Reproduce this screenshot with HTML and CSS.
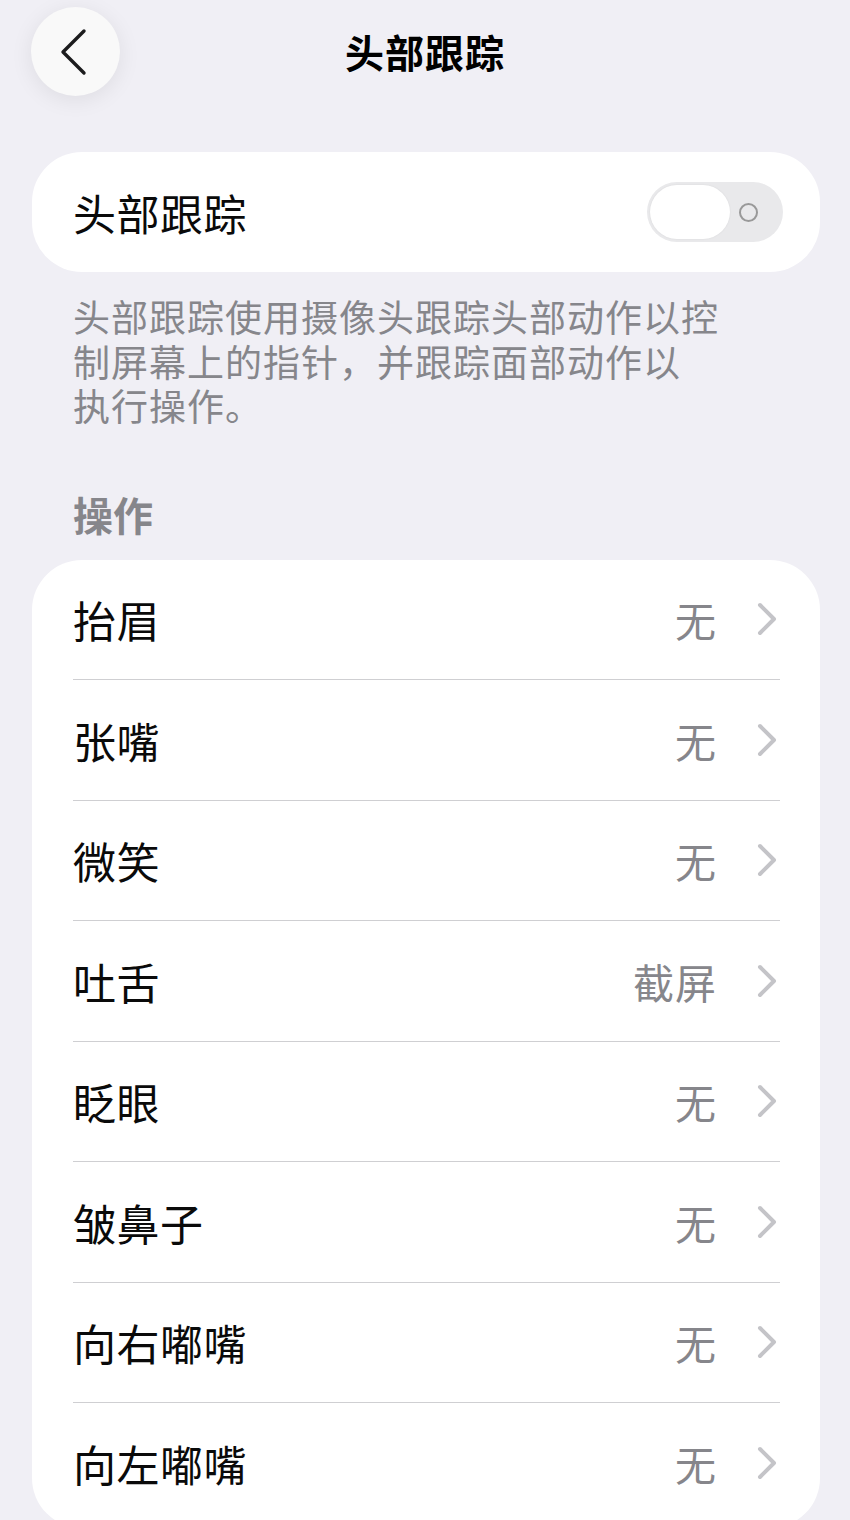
FILE: index.html
```html
<!DOCTYPE html>
<html lang="zh-CN">
    <head>
        <meta charset="utf-8">
        <meta name="viewport" content="width=device-width, initial-scale=1.0">
        <link rel="stylesheet" href="styles.css">
        <title>头部跟踪</title>
    </head>
    <body>
        <div class="screen">
            <div class="navbar">
                <div class="nav-side">
                    <button class="back-btn" type="button">
                        <svg width="28" height="48" viewBox="0 0 28 48">
                            <path d="M25 3 L4 24 L25 45" fill="none" stroke="#1c1c1e" stroke-width="3.4" stroke-linecap="round" stroke-linejoin="round"/>
                        </svg>
                    </button>
                </div>
                <h1 class="nav-title">头部跟踪</h1>
                <div class="nav-side"></div>
            </div>

            <section class="card card-single">
                <span class="row-label">头部跟踪</span>
                <div class="switch">
                    <div class="switch-knob"></div>
                    <div class="switch-off"></div>
                </div>
            </section>

            <p class="footnote">头部跟踪使用摄像头跟踪头部动作以控<br>制屏幕上的指针，并跟踪面部动作以<br>执行操作。</p>

            <h2 class="group-header">操作</h2>

            <section class="card card-list">
                <div class="row"><span class="row-label">抬眉</span><span class="row-value">无</span><span class="chevron"><svg width="20" height="34" viewBox="0 0 20 34"><path d="M3 3 L17 17 L3 31" fill="none" stroke="#c4c4c8" stroke-width="4" stroke-linecap="round" stroke-linejoin="round"/></svg></span></div>
                <div class="row"><span class="row-label">张嘴</span><span class="row-value">无</span><span class="chevron"><svg width="20" height="34" viewBox="0 0 20 34"><path d="M3 3 L17 17 L3 31" fill="none" stroke="#c4c4c8" stroke-width="4" stroke-linecap="round" stroke-linejoin="round"/></svg></span></div>
                <div class="row"><span class="row-label">微笑</span><span class="row-value">无</span><span class="chevron"><svg width="20" height="34" viewBox="0 0 20 34"><path d="M3 3 L17 17 L3 31" fill="none" stroke="#c4c4c8" stroke-width="4" stroke-linecap="round" stroke-linejoin="round"/></svg></span></div>
                <div class="row"><span class="row-label">吐舌</span><span class="row-value">截屏</span><span class="chevron"><svg width="20" height="34" viewBox="0 0 20 34"><path d="M3 3 L17 17 L3 31" fill="none" stroke="#c4c4c8" stroke-width="4" stroke-linecap="round" stroke-linejoin="round"/></svg></span></div>
                <div class="row"><span class="row-label">眨眼</span><span class="row-value">无</span><span class="chevron"><svg width="20" height="34" viewBox="0 0 20 34"><path d="M3 3 L17 17 L3 31" fill="none" stroke="#c4c4c8" stroke-width="4" stroke-linecap="round" stroke-linejoin="round"/></svg></span></div>
                <div class="row"><span class="row-label">皱鼻子</span><span class="row-value">无</span><span class="chevron"><svg width="20" height="34" viewBox="0 0 20 34"><path d="M3 3 L17 17 L3 31" fill="none" stroke="#c4c4c8" stroke-width="4" stroke-linecap="round" stroke-linejoin="round"/></svg></span></div>
                <div class="row"><span class="row-label">向右嘟嘴</span><span class="row-value">无</span><span class="chevron"><svg width="20" height="34" viewBox="0 0 20 34"><path d="M3 3 L17 17 L3 31" fill="none" stroke="#c4c4c8" stroke-width="4" stroke-linecap="round" stroke-linejoin="round"/></svg></span></div>
                <div class="row"><span class="row-label">向左嘟嘴</span><span class="row-value">无</span><span class="chevron"><svg width="20" height="34" viewBox="0 0 20 34"><path d="M3 3 L17 17 L3 31" fill="none" stroke="#c4c4c8" stroke-width="4" stroke-linecap="round" stroke-linejoin="round"/></svg></span></div>
            </section>
        </div>
    </body>
</html>
```

FILE: styles.css
```css
body {
  margin: 0;
  background-color: #f0eff5;
  font-family: "Noto Sans CJK SC", "Noto Sans", sans-serif;
  color: #000;
}
.screen {
  width: 850px;
  height: 1520px;
  overflow: hidden;
}

/* top bar */
.navbar {
  display: grid;
  grid-template-columns: 1fr auto 1fr;
  align-items: center;
  padding: 7px 31px 0 31px;
  height: 89px;
}
.back-btn {
  width: 89px;
  height: 89px;
  border: none;
  border-radius: 50%;
  background-color: #f9f9f9;
  box-shadow: 0 4px 22px rgba(0, 0, 0, 0.08);
  display: flex;
  align-items: center;
  justify-content: center;
  padding: 0 6px 0 0;
}
.nav-title {
  margin: 0;
  font-size: 39px;
  font-weight: 700;
  line-height: 44px;
  letter-spacing: 1px;
  position: relative;
  top: -1px;
}

/* grouped cards */
.card {
  background-color: #fff;
  border-radius: 50px;
  margin: 0 30px 0 32px;
}
.card-single {
  margin-top: 56px;
  height: 120px;
  display: flex;
  align-items: center;
  justify-content: space-between;
  padding: 0 37px 0 41px;
}
.row-label {
  font-size: 43px;
  line-height: 50px;
  letter-spacing: 0.5px;
  color: #0a0a0a;
}

.switch {
  width: 136px;
  height: 60px;
  border-radius: 30px;
  background-color: #e9e9eb;
  display: flex;
  align-items: center;
  padding: 0 3px;
  box-sizing: border-box;
}
.switch-knob {
  width: 80px;
  height: 54px;
  border-radius: 27px;
  background-color: #fff;
  box-shadow: 0 0 2px rgba(0, 0, 0, 0.08);
}
.switch-off {
  width: 15px;
  height: 15px;
  border: 2px solid #999;
  border-radius: 50%;
  margin-left: 9px;
}

.footnote {
  margin: 22px 0 0 73px;
  font-size: 37px;
  line-height: 44.5px;
  letter-spacing: 1px;
  color: #86868b;
}
.group-header {
  margin: 61px 0 21px 73px;
  font-size: 40px;
  line-height: 50px;
  font-weight: 700;
  color: #86868b;
}

.card-list {
  padding: 0 40px 4px 41px;
}
.row {
  height: 120.5px;
  box-sizing: border-box;
  display: flex;
  align-items: center;
  border-bottom: 1px solid #cfcfd2;
}
.row:last-child {
  border-bottom: none;
}
.row-value {
  margin-left: auto;
  font-size: 41px;
  line-height: 50px;
  color: #86868b;
  letter-spacing: 1px;
}
.chevron {
  display: flex;
  margin: 0 3px 0 40px;
}
```
